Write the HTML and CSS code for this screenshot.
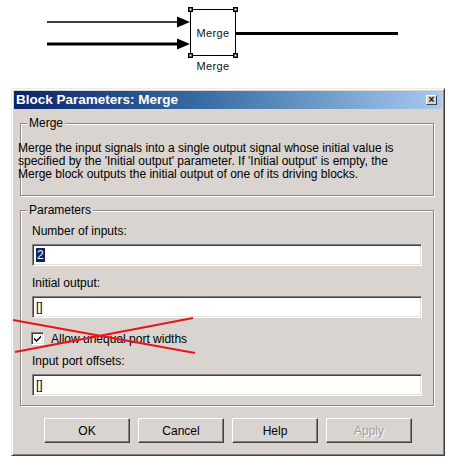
FILE: index.html
```html
<!DOCTYPE html>
<html>
<head>
<meta charset="utf-8">
<title>Block Parameters: Merge</title>
<link rel="stylesheet" href="styles.css">
</head>
<body>
<svg class="diagram" width="454" height="88" viewBox="0 0 454 88">
  <line x1="47" y1="22" x2="180" y2="22" stroke="#000" stroke-width="1.4"/>
  <polygon points="177,16.5 190,22 177,27.5" fill="#000"/>
  <line x1="47" y1="44" x2="180" y2="44" stroke="#000" stroke-width="3"/>
  <polygon points="177,38.5 190,44 177,49.5" fill="#000"/>
  <rect x="190.5" y="9.5" width="45" height="46" fill="#fff" stroke="#000" stroke-width="1"/>
  <line x1="236" y1="33.5" x2="398" y2="33.5" stroke="#000" stroke-width="3"/>
  <rect x="188" y="7" width="5" height="5" fill="#000"/>
  <rect x="233" y="7" width="5" height="5" fill="#000"/>
  <rect x="188" y="53" width="5" height="5" fill="#000"/>
  <rect x="233" y="53" width="5" height="5" fill="#000"/>
  <rect x="189.5" y="8.5" width="2" height="2" fill="#fff"/>
  <rect x="234.5" y="8.5" width="2" height="2" fill="#fff"/>
  <rect x="189.5" y="54.5" width="2" height="2" fill="#fff"/>
  <rect x="234.5" y="54.5" width="2" height="2" fill="#fff"/>
  <text class="blocktext" x="213" y="37" text-anchor="middle">Merge</text>
  <text class="blocktext" x="213" y="70" text-anchor="middle">Merge</text>
</svg>

<div class="dialog">
  <div class="titlebar">
    <span class="title">Block Parameters: Merge</span>
    <span class="close">×</span>
  </div>

  <div class="group group-desc">
    <span class="group-label">Merge</span>
    <p class="desc">Merge the input signals into a single output signal whose initial value is<br>specified by the 'Initial output' parameter. If 'Initial output' is empty, the<br>Merge block outputs the initial output of one of its driving blocks.</p>
  </div>

  <div class="group group-params">
    <span class="group-label">Parameters</span>
    <div class="field-label">Number of inputs:</div>
    <div class="input"><span class="selected">2</span></div>
    <div class="field-label gap">Initial output:</div>
    <div class="input">[]</div>
    <div class="check-row">
      <span class="checkbox">
        <svg width="9" height="9" viewBox="0 0 9 9"><path d="M1 3.5 L3.5 6 L8 1.5 L8 3.5 L3.5 8 L1 5.5 Z" fill="#000"/></svg>
      </span>
      <span class="check-label">Allow unequal port widths</span>
    </div>
    <div class="field-label gap2">Input port offsets:</div>
    <div class="input">[]</div>
  </div>

  <div class="buttons">
    <button class="btn">OK</button>
    <button class="btn">Cancel</button>
    <button class="btn">Help</button>
    <button class="btn disabled">Apply</button>
  </div>
</div>

<svg class="cross" width="454" height="465" viewBox="0 0 454 465">
  <line x1="13" y1="320" x2="195" y2="353" stroke="#e8141a" stroke-width="2"/>
  <line x1="15" y1="352" x2="193" y2="318" stroke="#e8141a" stroke-width="2"/>
</svg>
</body>
</html>
```

FILE: styles.css
```css
html, body {
  margin: 0;
  padding: 0;
  background: #fff;
}

body {
  width: 454px;
  height: 465px;
  overflow: hidden;
  font-family: "Liberation Sans", Arial, sans-serif;
  font-size: 12px;
  color: #000;
}

.diagram {
  display: block;
}

.blocktext {
  font-family: "Liberation Sans", Arial, sans-serif;
  font-size: 11px;
  letter-spacing: 0.4px;
  fill: #111;
}

.dialog {
  margin-left: 11px;
  width: 434px;
  height: 368px;
  box-sizing: border-box;
  background: #d9d4cf;
  border: 1px solid;
  border-color: #ece9e6 #404040 #404040 #ece9e6;
  box-shadow: inset 1px 1px 0 #fff, inset -1px -1px 0 #808080;
  padding: 2px;
  display: flex;
  flex-direction: column;
}

.titlebar {
  height: 18px;
  background: linear-gradient(to right, #0a246a 0%, #3a6ea5 45%, #a6caf0 100%);
  display: flex;
  align-items: center;
  justify-content: space-between;
  padding: 0 5px 0 2px;
}

.title {
  color: #fff;
  font-weight: bold;
  font-size: 13.5px;
  line-height: 18px;
}

.close {
  width: 11px;
  height: 10px;
  box-sizing: border-box;
  background: #d9d4cf;
  border: 1px solid;
  border-color: #fff #404040 #404040 #fff;
  font-size: 10px;
  line-height: 8px;
  text-align: center;
  font-weight: bold;
  color: #000;
}

.group {
  position: relative;
  margin: 0 8px 0 6px;
  border: 1px solid #8c8884;
  box-shadow: 1px 1px 0 #fff, inset 1px 1px 0 #fff;
}

.group-label {
  position: absolute;
  top: -8px;
  left: 6px;
  padding: 0 2px;
  background: #d9d4cf;
  line-height: 14px;
}

.group-desc {
  margin-top: 14px;
  padding: 18px 6px 14px 0;
}

.desc {
  margin: 0 0 0 -3px;
  line-height: 13px;
}

.group-params {
  margin-top: 14px;
  padding: 13px 11px 9px 11px;
}

.field-label {
  line-height: 14px;
  margin-bottom: 6px;
}

.field-label.gap {
  margin-top: 10px;
}

.field-label.gap2 {
  margin-top: 8px;
}

.input {
  height: 22px;
  box-sizing: border-box;
  background: #fff;
  border: 1px solid;
  border-color: #808080 #fff #fff #808080;
  box-shadow: inset 1px 1px 0 #404040, inset -1px -1px 0 #e4e0dc;
  padding: 2px 0 0 3px;
  line-height: 16px;
}

.selected {
  background: #0a246a;
  color: #fff;
  padding: 0 1px;
}

.check-row {
  display: flex;
  align-items: center;
  margin-top: 13px;
  height: 15px;
}

.checkbox {
  width: 13px;
  height: 13px;
  box-sizing: border-box;
  background: #fff;
  border: 1px solid;
  border-color: #808080 #fff #fff #808080;
  box-shadow: inset 1px 1px 0 #404040, inset -1px -1px 0 #e4e0dc;
  display: flex;
  align-items: center;
  justify-content: center;
  margin-left: -1px;
}

.check-label {
  margin-left: 7px;
  line-height: 14px;
}

.buttons {
  display: flex;
  gap: 8px;
  padding-left: 30px;
  margin-top: 12px;
}

.btn {
  width: 86px;
  height: 25px;
  box-sizing: border-box;
  background: #d9d4cf;
  border: 1px solid;
  border-color: #fff #404040 #404040 #fff;
  box-shadow: inset -1px -1px 0 #808080;
  font-family: "Liberation Sans", Arial, sans-serif;
  font-size: 12px;
  color: #000;
  padding: 0;
}

.btn.disabled {
  color: #a09c98;
  text-shadow: 1px 1px 0 #fff;
}

.cross {
  position: absolute;
  left: 0;
  top: 0;
  pointer-events: none;
}
```
